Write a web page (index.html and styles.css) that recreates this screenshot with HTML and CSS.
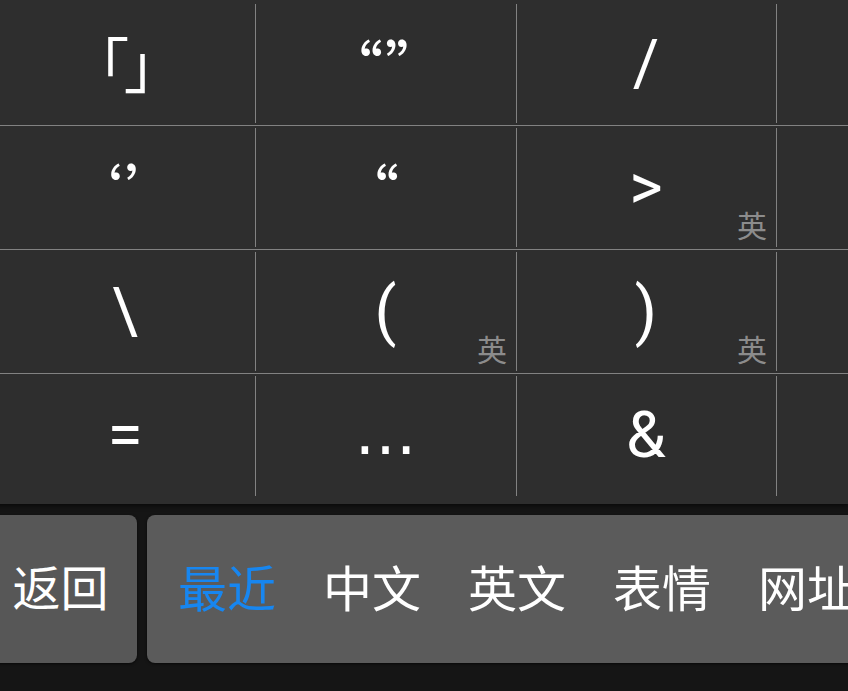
FILE: index.html
```html
<!DOCTYPE html>
<html lang="zh-CN">
<head>
  <meta charset="UTF-8" />
  <meta name="viewport" content="width=device-width, initial-scale=1.0"/>
  <title>符号键盘</title>
  <link rel="stylesheet" href="styles.css">
</head>
<body>
  <div class="keyboard">
    <div class="symbols">
      <div class="key"><span class="sym cjk bracket">「」</span></div>
      <div class="key"><span class="sym cjk">“”</span></div>
      <div class="key"><span class="sym">/</span></div>
      <div class="key"></div>

      <div class="key"><span class="sym cjk">‘’</span></div>
      <div class="key"><span class="sym cjk">“</span></div>
      <div class="key"><span class="sym">&gt;</span><span class="tag">英</span></div>
      <div class="key"></div>

      <div class="key"><span class="sym">\</span></div>
      <div class="key"><span class="sym">(</span><span class="tag">英</span></div>
      <div class="key"><span class="sym">)</span><span class="tag">英</span></div>
      <div class="key"></div>

      <div class="key last"><span class="sym">=</span></div>
      <div class="key last"><span class="sym dots">…</span></div>
      <div class="key last"><span class="sym">&amp;</span></div>
      <div class="key last"></div>
    </div>

    <div class="bottom-bar">
      <div class="back-btn">返回</div>
      <div class="tabs">
        <span class="tab active">最近</span>
        <span class="tab">中文</span>
        <span class="tab">英文</span>
        <span class="tab">表情</span>
        <span class="tab">网址</span>
      </div>
    </div>
  </div>
</body>
</html>
```

FILE: styles.css
```css
html, body {
  margin: 0;
  padding: 0;
  background: #151515;
  overflow: hidden;
}
body {
  width: 848px;
  height: 691px;
  font-family: Roboto, "Noto Sans CJK SC", sans-serif;
  color: white;
}
.keyboard {
  display: flex;
  flex-direction: column;
}
.symbols {
  background: #2e2e2e;
  height: 504px;
  box-sizing: border-box;
  padding-top: 2px;
  display: grid;
  grid-template-columns: 260px 261px 260px 260px;
  grid-template-rows: repeat(4, 124px);
  margin-left: -5px;
  box-shadow: 0 2px 4px rgba(0,0,0,0.5);
}
.key {
  position: relative;
  box-sizing: border-box;
  border-bottom: 1px solid #828282;
  display: flex;
  align-items: center;
  justify-content: center;
}
.key.last {
  border-bottom: none;
}
/* vertical divider, slightly shorter than the row */
.key::before {
  content: "";
  position: absolute;
  left: 0;
  top: 2px;
  bottom: 2px;
  width: 1px;
  background: #828282;
}
.key:nth-child(4n+1)::before {
  display: none;
}
.sym {
  font-size: 64px;
  line-height: 1;
}
.sym.cjk {
  font-family: "Noto Sans CJK SC", sans-serif;
  font-size: 58px;
  font-feature-settings: "palt" 1;
  letter-spacing: 3px;
}
.sym.bracket {
  font-size: 60px;
  letter-spacing: -3px;
  margin-top: -4px;
}
.sym.dots {
  font-family: "DejaVu Sans", sans-serif;
  font-size: 62px;
  margin-top: -6px;
}
.tag {
  position: absolute;
  right: 9px;
  bottom: 10px;
  font-family: "Noto Sans CJK SC", sans-serif;
  font-size: 30px;
  line-height: 1;
  color: #8c8c8c;
}
.bottom-bar {
  display: flex;
  gap: 10px;
  padding-top: 11px;
  height: 148px;
  font-family: "Noto Sans CJK SC", sans-serif;
}
.back-btn {
  flex: none;
  width: 153px;
  margin-left: -16px;
  height: 148px;
  box-sizing: border-box;
  padding-bottom: 8px;
  background: #575757;
  border-radius: 8px;
  box-shadow: 0 1px 3px rgba(0,0,0,0.6);
  display: flex;
  align-items: center;
  justify-content: center;
  font-size: 48px;
}
.tabs {
  flex: none;
  width: 760px;
  height: 148px;
  background: #5b5b5b;
  border-radius: 8px;
  box-shadow: 0 1px 3px rgba(0,0,0,0.6);
  display: flex;
  align-items: center;
  gap: 47px;
  padding-left: 31px;
  padding-bottom: 8px;
  box-sizing: border-box;
  white-space: nowrap;
  overflow: hidden;
  font-size: 49px;
}
.tab.active {
  color: #1786f0;
}
```
